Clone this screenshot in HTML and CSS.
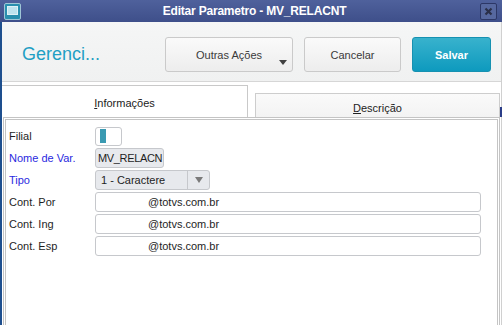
FILE: index.html
```html
<!DOCTYPE html>
<html lang="pt">
<head>
<meta charset="utf-8">
<link rel="stylesheet" href="styles.css">
</head>
<body>
<div class="win">
  <div class="titlebar">
    <div class="appicon"><div class="screen"></div></div>
    <div class="title">Editar Parametro - MV_RELACNT</div>
    <div class="close">
      <svg width="9" height="9" viewBox="0 0 9 9"><path d="M1.5 1.5 L7.5 7.5 M7.5 1.5 L1.5 7.5" stroke="#2a2f48" stroke-width="2.2"/></svg>
    </div>
  </div>
  <div class="main">
    <div class="toolbar">
      <div class="brand">Gerenci...</div>
      <div class="btn btn-more">Outras Ações<span class="caret"></span></div>
      <div class="btn btn-cancel">Cancelar</div>
      <div class="btn btn-save">Salvar</div>
    </div>
    <div class="tabs">
      <div class="tab tab-active"><span><u>I</u>nformações</span></div>
      <div class="tab tab-other"><span><u>D</u>escrição</span></div>
      <div class="tabmark"></div>
    </div>
    <div class="panel">
      <div class="row">
        <div class="label">Filial</div>
        <div class="field f-filial"><span class="cursor"></span></div>
      </div>
      <div class="row">
        <div class="label blue">Nome de Var.</div>
        <div class="field f-name">MV_RELACN</div>
      </div>
      <div class="row">
        <div class="label blue">Tipo</div>
        <div class="field f-type"><span class="tval">1 - Caractere</span><span class="tbtn"><span class="tarrow"></span></span></div>
      </div>
      <div class="row">
        <div class="label">Cont. Por</div>
        <div class="field f-text">@totvs.com.br</div>
      </div>
      <div class="row">
        <div class="label">Cont. Ing</div>
        <div class="field f-text">@totvs.com.br</div>
      </div>
      <div class="row">
        <div class="label">Cont. Esp</div>
        <div class="field f-text">@totvs.com.br</div>
      </div>
    </div>
  </div>
</div>
</body>
</html>
```

FILE: styles.css
```css
html, body {
  margin: 0;
  padding: 0;
  width: 502px;
  height: 325px;
  overflow: hidden;
  background: #ffffff;
  font-family: "Liberation Sans", Arial, sans-serif;
}

.win {
  display: flex;
  flex-direction: column;
  width: 502px;
  height: 325px;
}

.titlebar {
  height: 22px;
  flex: none;
  display: flex;
  align-items: center;
  position: relative;
  background: linear-gradient(#4f619c, #3e4f8a);
}

.appicon {
  margin-left: 4px;
  width: 15px;
  height: 15px;
  border: 1px solid #9fc6d6;
  border-radius: 2px;
  background: #2a8fae;
  display: flex;
  align-items: center;
  justify-content: center;
}

.screen {
  width: 9px;
  height: 7px;
  border: 1px solid #dff1f6;
  background: #bfe3ee;
  margin-bottom: 2px;
}

.title {
  flex: 1;
  text-align: center;
  color: #ffffff;
  font-weight: bold;
  font-size: 12px;
  letter-spacing: -0.2px;
  padding-left: 8px;
}

.close {
  width: 15px;
  height: 15px;
  margin-right: 5px;
  border: 1px solid #2c3766;
  border-radius: 2px;
  background: #56689f;
  display: flex;
  align-items: center;
  justify-content: center;
}

.main {
  flex: 1;
  display: flex;
  flex-direction: column;
  border-left: 2px solid #1e4f8e;
  border-right: 1px solid #d0d0d0;
  min-height: 0;
}

.toolbar {
  height: 44px;
  flex: none;
  display: flex;
  align-items: flex-start;
  padding-top: 15px;
  background: linear-gradient(#f5f6f6, #f0f1f1);
  border-bottom: 1px solid #d6d6d6;
}

.brand {
  width: 143px;
  padding-left: 20px;
  font-size: 18px;
  line-height: 35px;
  color: #1f9fc4;
}

.btn {
  height: 33px;
  border: 1px solid #cacaca;
  border-radius: 3px;
  background: linear-gradient(#fafafa, #ededed);
  display: flex;
  align-items: center;
  justify-content: center;
  font-size: 11px;
  color: #3a3a3a;
  position: relative;
}

.btn-more {
  width: 126px;
}

.caret {
  position: absolute;
  right: 5px;
  bottom: 6px;
  width: 0;
  height: 0;
  border-left: 4px solid transparent;
  border-right: 4px solid transparent;
  border-top: 5px solid #404040;
}

.btn-cancel {
  width: 95px;
  margin-left: 11px;
}

.btn-save {
  width: 77px;
  margin-left: 11px;
  border-color: #1691b1;
  background: linear-gradient(#38b2cd, #0e9abe);
  color: #ffffff;
  font-weight: bold;
}

.tabs {
  flex: none;
  display: flex;
  align-items: flex-end;
  height: 35px;
  position: relative;
}

.tab {
  display: flex;
  align-items: center;
  justify-content: center;
  font-size: 11px;
  color: #222222;
  box-sizing: border-box;
}

.tab-active {
  width: 246px;
  height: 32px;
  background: #ffffff;
  border: 1px solid #c9c9c9;
  border-bottom: none;
  border-left: none;
}

.tab-active span {
  margin-top: 3px;
}

.tab-other {
  width: 245px;
  height: 24px;
  margin-left: 7px;
  background: linear-gradient(#fafafa, #f3f3f3);
  border: 1px solid #cdcdcd;
  border-bottom: none;
}

.tab-other span {
  margin-top: 4px;
}

.tabmark {
  position: absolute;
  right: -1px;
  bottom: 0;
  width: 2px;
  height: 10px;
  background: #2b3d88;
}

.panel {
  flex: 1;
  margin-left: 1px;
  margin-right: 1px;
  border: 3px double #c4c4c4;
  border-bottom: none;
  padding: 6px 0 0 3px;
  display: flex;
  flex-direction: column;
  gap: 2px;
}

.row {
  display: flex;
  align-items: center;
  height: 20px;
}

.label {
  width: 86px;
  font-size: 11px;
  color: #1e1e1e;
}

.label.blue {
  color: #2a2ae0;
}

.field {
  box-sizing: border-box;
  height: 20px;
  border: 1px solid #c6c8cc;
  border-radius: 3px;
  font-size: 11px;
  color: #1e1e1e;
  display: flex;
  align-items: center;
  overflow: hidden;
  white-space: nowrap;
}

.f-filial {
  width: 27px;
  height: 19px;
  background: #ffffff;
  padding-left: 4px;
}

.cursor {
  width: 6px;
  height: 14px;
  background: #3a9ab2;
}

.f-name {
  width: 69px;
  background: #e7e9ed;
  padding-left: 2px;
  letter-spacing: -0.35px;
}

.f-type {
  width: 115px;
  background: #e7e9ed;
  padding-left: 5px;
}

.tval {
  flex: 1;
}

.tbtn {
  width: 21px;
  height: 100%;
  border-left: 1px solid #c6c8cc;
  display: flex;
  align-items: center;
  justify-content: center;
}

.tarrow {
  width: 0;
  height: 0;
  border-left: 4px solid transparent;
  border-right: 4px solid transparent;
  border-top: 6px solid #7a7a7a;
}

.f-text {
  width: 386px;
  background: #ffffff;
  padding-left: 52px;
  position: relative;
}

.f-text::before {
  content: "";
  position: absolute;
  top: -1px;
  left: 3px;
  width: 49px;
  height: 1px;
  background: #ffffff;
}
```
